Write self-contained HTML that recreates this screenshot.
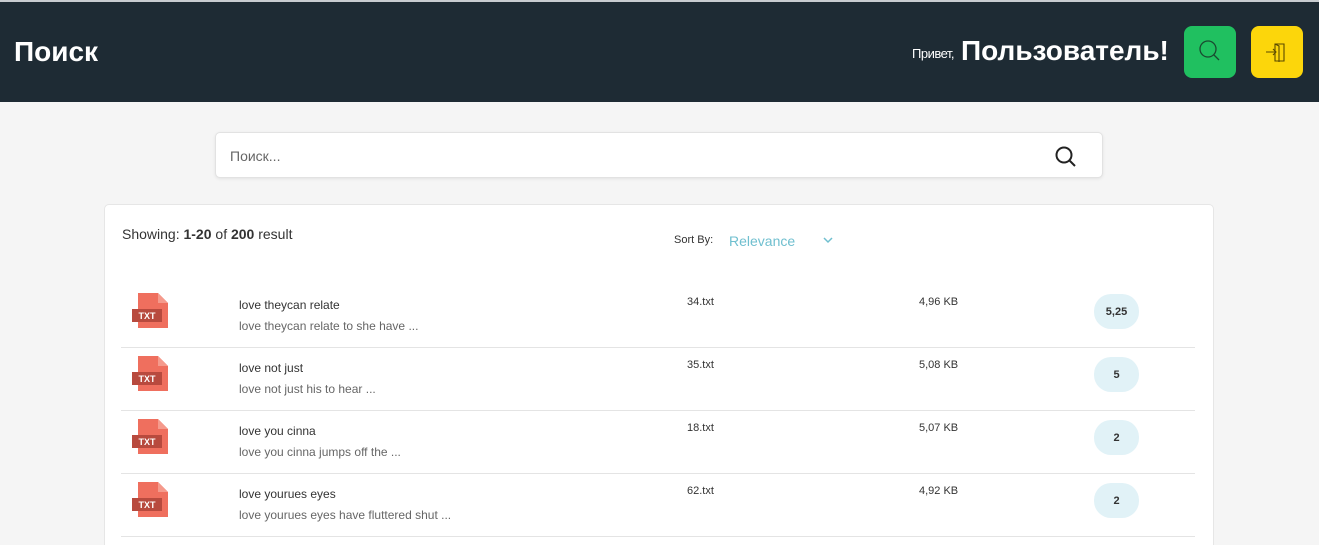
<!DOCTYPE html>
<html><head><meta charset="utf-8"><style>
*{box-sizing:border-box;margin:0;padding:0}
html,body{width:1319px;height:545px;overflow:hidden}
body{background:#f5f5f5;font-family:"Liberation Sans",Arial,sans-serif;color:#333;position:relative}
.top{position:absolute;left:0;top:0;width:1319px;height:102px;background:#1e2b34;border-top:2px solid #c8ccd0}
.title{position:absolute;left:14px;top:34px;font-size:28px;font-weight:bold;color:#fff}
.hi{position:absolute;left:912px;top:44px;font-size:13px;color:#fff;letter-spacing:-0.5px}
.user{position:absolute;left:961px;top:33px;font-size:28px;font-weight:bold;color:#fff}
.btn{position:absolute;top:24px;width:52px;height:52px;border-radius:8px}
.search{position:absolute;left:215px;top:132px;width:888px;height:46px;background:#fff;border:1px solid #e2e2e2;border-radius:5px;box-shadow:0 1px 3px rgba(0,0,0,0.08)}
.search span{position:absolute;left:14px;top:15px;font-size:14px;color:#666}
.card{position:absolute;left:104px;top:204px;width:1110px;height:360px;background:#fff;border:1px solid #e6e6e6;border-radius:5px}
.t{position:absolute;font-size:12px;color:#333;white-space:nowrap}
.row{position:absolute;left:17px;width:1074px;height:63px;border-bottom:1px solid #e4e4e4}
.pill{position:absolute;left:973px;width:45px;height:35px;border-radius:17px;background:#e1f2f7;font-size:11px;font-weight:bold;text-align:center;line-height:37px;color:#333}
</style></head><body>
<div class="top">
<div class="title">Поиск</div>
<div class="hi">Привет,</div>
<div class="user">Пользователь!</div>
<div class="btn" style="left:1184px;background:#20c060"><svg width="52" height="52"><circle cx="24" cy="23" r="8" fill="none" stroke="#1a4a30" stroke-width="1.3"/><line x1="30" y1="29" x2="35" y2="34" stroke="#1a4a30" stroke-width="1.3"/></svg></div>
<div class="btn" style="left:1251px;background:#fcd60b"><svg width="52" height="52"><path d="M24 18h9v17h-9z M24 18l4 2v16" fill="none" stroke="#5a4a00" stroke-width="1.1"/><path d="M15 26h10M22 23l3 3-3 3" fill="none" stroke="#5a4a00" stroke-width="1.1"/></svg></div>
</div>
<div class="search"><span>Поиск...</span><svg style="position:absolute;left:838px;top:12px" width="24" height="24"><circle cx="10" cy="10" r="7.5" fill="none" stroke="#222" stroke-width="2"/><line x1="15.5" y1="15.5" x2="21" y2="21" stroke="#222" stroke-width="2"/></svg></div>
<div class="card">
<div class="t" style="left:17px;top:21px;font-size:14px">Showing: <b>1-20</b> of <b>200</b> result</div>
<div class="t" style="left:569px;top:29px;font-size:11px">Sort By:</div>
<div class="t" style="left:624px;top:28px;font-size:14px;color:#6fbfcf">Relevance</div>
<svg style="position:absolute;left:718px;top:31px" width="10" height="8"><path d="M1 2l4 4 4-4" fill="none" stroke="#6fbfcf" stroke-width="1.5"/></svg>
</div>
<div style="position:absolute;left:104px;top:205px;width:1110px">
<div class="row" style="top:80px"><svg style="position:absolute;left:11px;top:8px" width="40" height="38"><path d="M6 0h20l10 10v25h-30z" fill="#ef6f5e"/><path d="M26 0v10h10z" fill="#f59a8c"/><rect x="0" y="16" width="30" height="13" fill="#b84a3e"/><text x="15" y="26" font-size="9" font-weight="bold" fill="#fff" text-anchor="middle" font-family="Liberation Sans">TXT</text></svg>
<div class="t" style="left:118px;top:13px">love theycan relate</div><div class="t" style="left:118px;top:34px;color:#666">love theycan relate to she have ...</div>
<div class="t" style="left:566px;top:11px;font-size:11px">34.txt</div><div class="t" style="left:798px;top:11px;font-size:11px">4,96 KB</div><div class="pill" style="top:9px">5,25</div></div>
<div class="row" style="top:143px"><svg style="position:absolute;left:11px;top:8px" width="40" height="38"><path d="M6 0h20l10 10v25h-30z" fill="#ef6f5e"/><path d="M26 0v10h10z" fill="#f59a8c"/><rect x="0" y="16" width="30" height="13" fill="#b84a3e"/><text x="15" y="26" font-size="9" font-weight="bold" fill="#fff" text-anchor="middle" font-family="Liberation Sans">TXT</text></svg>
<div class="t" style="left:118px;top:13px">love not just</div><div class="t" style="left:118px;top:34px;color:#666">love not just his to hear ...</div>
<div class="t" style="left:566px;top:11px;font-size:11px">35.txt</div><div class="t" style="left:798px;top:11px;font-size:11px">5,08 KB</div><div class="pill" style="top:9px">5</div></div>
<div class="row" style="top:206px"><svg style="position:absolute;left:11px;top:8px" width="40" height="38"><path d="M6 0h20l10 10v25h-30z" fill="#ef6f5e"/><path d="M26 0v10h10z" fill="#f59a8c"/><rect x="0" y="16" width="30" height="13" fill="#b84a3e"/><text x="15" y="26" font-size="9" font-weight="bold" fill="#fff" text-anchor="middle" font-family="Liberation Sans">TXT</text></svg>
<div class="t" style="left:118px;top:13px">love you cinna</div><div class="t" style="left:118px;top:34px;color:#666">love you cinna jumps off the ...</div>
<div class="t" style="left:566px;top:11px;font-size:11px">18.txt</div><div class="t" style="left:798px;top:11px;font-size:11px">5,07 KB</div><div class="pill" style="top:9px">2</div></div>
<div class="row" style="top:269px"><svg style="position:absolute;left:11px;top:8px" width="40" height="38"><path d="M6 0h20l10 10v25h-30z" fill="#ef6f5e"/><path d="M26 0v10h10z" fill="#f59a8c"/><rect x="0" y="16" width="30" height="13" fill="#b84a3e"/><text x="15" y="26" font-size="9" font-weight="bold" fill="#fff" text-anchor="middle" font-family="Liberation Sans">TXT</text></svg>
<div class="t" style="left:118px;top:13px">love yourues eyes</div><div class="t" style="left:118px;top:34px;color:#666">love yourues eyes have fluttered shut ...</div>
<div class="t" style="left:566px;top:11px;font-size:11px">62.txt</div><div class="t" style="left:798px;top:11px;font-size:11px">4,92 KB</div><div class="pill" style="top:9px">2</div></div>
</div>
</body></html>
